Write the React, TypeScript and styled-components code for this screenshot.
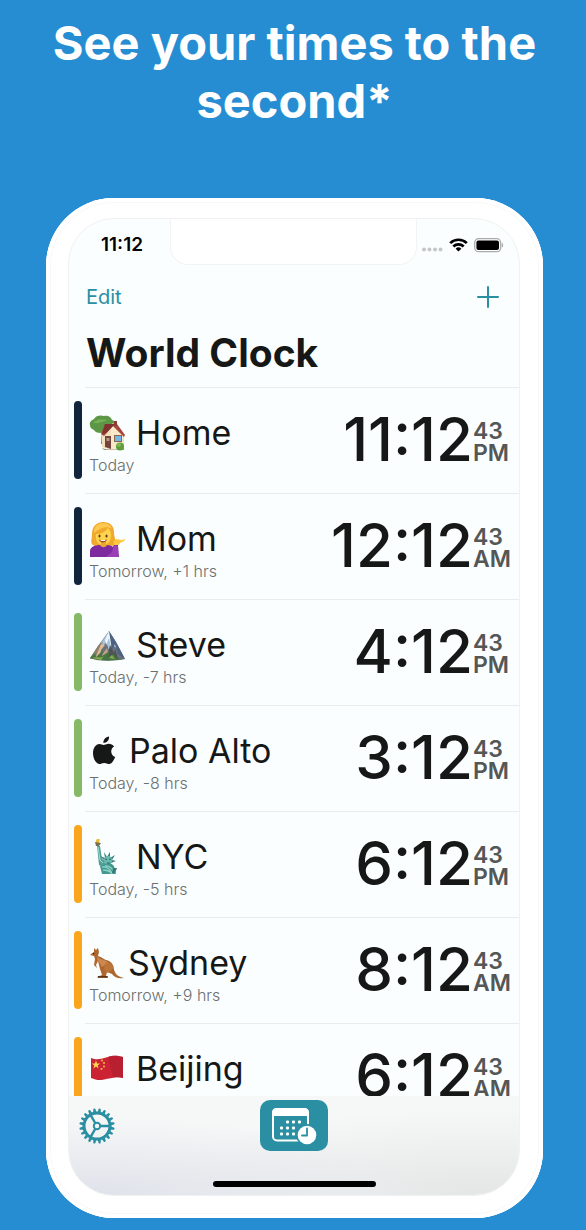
import React from "react";
import styled, { createGlobalStyle } from "styled-components";

const TEAL = "#2a8fa2";

const GlobalStyle = createGlobalStyle`
  * { box-sizing: border-box; }
  body { margin: 0; background: #278dd3; font-family: Inter, "Liberation Sans", sans-serif; }
  h1, h2, h3, p, ul { margin: 0; padding: 0; }
  button { border: 0; padding: 0; background: none; font: inherit; cursor: pointer; }
  svg { display: block; flex: none; }
`;

const Page = styled.main`
  padding: 14px 43px 12px 46px;
`;

const Headline = styled.h1`
  max-width: 500px;
  margin: 0 auto 68px;
  color: #fff;
  font-size: 47px;
  font-weight: 700;
  line-height: 58px;
  text-align: center;
`;

const Phone = styled.section`
  padding: 20px 23px 22px 22px;
  border-radius: 68px;
  background: #fff;
  box-shadow: inset 0 0 0 4px #fff, inset 0 0 0 5px #f8f8f8;
`;

const Screen = styled.div`
  overflow: hidden;
  border: 1px solid #f0f1f1;
  border-radius: 46px;
  background: #fbfefe;
`;

const StatusBar = styled.div`
  display: grid;
  grid-template-columns: 101fr 248fr 102fr;
  height: 46px;
`;

const StatusTime = styled.time`
  padding: 14px 0 0 32px;
  font-size: 19px;
  font-weight: 600;
  line-height: 24px;
`;

const Notch = styled.div`
  margin-top: -1px;
  border: 1px solid #f2f3f3;
  border-top: 0;
  border-radius: 0 0 18px 18px;
  background: #fff;
`;

const StatusIcons = styled.div`
  display: flex;
  align-items: flex-start;
  justify-content: flex-end;
  gap: 6px;
  padding: 18px 15px 0 0;
`;

const NavBar = styled.nav`
  display: flex;
  align-items: center;
  justify-content: space-between;
  height: 64px;
  padding: 0 19px 0 17px;
  color: ${TEAL};
`;

const NavButton = styled.button`
  color: inherit;
  font-size: 20px;
  font-weight: 400;
  line-height: 24px;
`;

const Title = styled.h2`
  padding: 0 17px 10px;
  color: #161817;
  font-size: 39px;
  font-weight: 700;
  line-height: 48px;
`;

const ClockList = styled.ul`
  list-style: none;
`;

const Row = styled.li`
  display: flex;
  align-items: center;
  height: 106px;
  padding-left: 5px;
`;

const Marker = styled.span<{ $color: string }>`
  flex: none;
  width: 8px;
  height: 78px;
  margin-right: 3px;
  border-radius: 4px;
  background: ${(p) => p.$color};
`;

const RowBody = styled.div`
  display: flex;
  flex: 1;
  align-items: center;
  justify-content: space-between;
  height: 100%;
  padding: 2px 9px 0 4px;
  border-top: 1px solid #e9ecec;
`;

const Info = styled.div`
  padding-top: 3px;
`;

const Place = styled.h3<{ $gap: number }>`
  display: flex;
  align-items: center;
  gap: ${(p) => p.$gap}px;
  color: #161817;
  font-size: 34px;
  font-weight: 400;
  line-height: 44px;
  white-space: nowrap;
`;

const Offset = styled.p`
  min-height: 20px;
  color: #6c6f6f;
  font-size: 16px;
  font-weight: 300;
  line-height: 20px;
`;

const Clock = styled.time`
  display: flex;
  align-items: center;
  color: #161817;
`;

const Hours = styled.span`
  padding-bottom: 6px;
  font-size: 60px;
  font-weight: 500;
  line-height: 72px;
`;

const Suffix = styled.span`
  display: flex;
  flex-direction: column;
  width: 37px;
  color: #555757;
  font-size: 23px;
  font-weight: 600;
  line-height: 22px;
`;

const TabBar = styled.footer`
  position: relative;
  display: grid;
  grid-template-columns: 1fr auto 1fr;
  justify-items: start;
  margin-top: -33px;
  padding: 4px 10px 8px;
  row-gap: 30px;
  background:
    radial-gradient(ellipse at 5% 100%, #dfe2ea 0%, rgba(230, 232, 238, 0) 55%),
    radial-gradient(ellipse at 90% 95%, #e5e7e7 0%, rgba(235, 237, 237, 0) 60%),
    #f6f7f7;
`;

const TabButton = styled.button<{ $active?: boolean }>`
  display: flex;
  align-items: center;
  justify-content: center;
  height: 51px;
  width: ${(p) => (p.$active ? "68px" : "36px")};
  border-radius: 10px;
  color: ${(p) => (p.$active ? "#fff" : TEAL)};
  background: ${(p) => (p.$active ? TEAL : "transparent")};
`;

const HomeIndicator = styled.div`
  grid-column: 1 / -1;
  justify-self: center;
  width: 163px;
  height: 6px;
  border-radius: 3px;
  background: #000;
`;

const Signal = () => (
  <svg width="22" height="16" viewBox="0 0 22 16" fill="#c6c8c8">
    {[3, 8.5, 14, 19.5].map((x) => (
      <circle key={x} cx={x} cy="12.500" r="2" />
    ))}
  </svg>
);

const Wifi = () => (
  <svg width="19" height="16" viewBox="0 0 19 16" fill="none" stroke="#000" strokeWidth="2.7">
    <path d="M1.2 6.1a12 12 0 0 1 16.6 0" />
    <path d="M4.3 9.5a7.5 7.5 0 0 1 10.4 0" />
    <path d="M9.5 14.6 6.6 11.7a4.2 4.2 0 0 1 5.8 0z" fill="#000" stroke="none" />
  </svg>
);

const Battery = () => (
  <svg width="30" height="16" viewBox="0 0 30 16">
    <rect x="0.7" y="1.7" width="26" height="13" rx="4" fill="#fff" stroke="#a9abab" strokeWidth="1.3" />
    <rect x="2.4" y="3.4" width="22.6" height="9.6" rx="2" />
    <path d="M27.8 6v4.5c1.8-.6 1.8-3.9 0-4.5z" fill="#a9abab" />
  </svg>
);

const Plus = () => (
  <svg width="24" height="24" viewBox="0 0 24 24" stroke="currentColor" strokeWidth="2" strokeLinecap="round">
    <path d="M12 2v20M2 12h20" />
  </svg>
);

const House = () => (
  <svg width="36" height="36" viewBox="0 0 36 36">
    <path d="M12 12h4v17h-4z" fill="#83533a" />
    <path d="M1 10c-1-3 2-5 4-6 2-4 7-4 10-3 4-1 7 1 8 4 4 1 4 5 3 7 0 4-4 6-7 5-3 3-6 2-7 1-4 0-6-1-7-3-3-1-4-3-4-5z" fill="#5b9744" />
    <path d="M4 8c2-3 5-2 6-4 3 2 6-1 8 2-3-1-4 2-7 1-3 3-5 0-7 1z" fill="#77b157" />
    <path d="M12 18 24 8l11 11v13l-13 3-9-3z" fill="#f2dfbd" />
    <path d="m22 10 12 10v13l-12 2z" fill="#fae9c9" />
    <path d="M12 19 16 9h12l8 11-1 2-11-11-9 10z" fill="#a8453d" />
    <path d="m16 9 10 0-9 9-4 1z" fill="#7e332f" />
    <path d="M25 6h3v5h-3z" fill="#8c3e34" />
    <path d="M16 21h6v13l-6-2z" fill="#75453b" />
    <path d="M17.500 23h3v3h-3z" fill="#b39a88" />
    <path d="M25 20h8v7h-8z" fill="#8a6850" />
    <path d="M26 21h6v5h-6z" fill="#75b6e8" />
    <path d="M13 33c6 2 15 2 22 0v2H15z" fill="#9a9883" />
    <circle cx="31" cy="31.500" r="4" fill="#5f9d3c" />
    <circle cx="30" cy="30" r="2" fill="#83b756" />
  </svg>
);

const Woman = () => (
  <svg width="36" height="36" viewBox="0 0 36 36">
    <path d="M4 24C1 22 3 18 3 13 3 5 8 1 14 1c7 0 11 4 11 10 0 6 3 10 1 13-3 2-19 3-22 0z" fill="#f0a92e" />
    <path d="M5 12C5 5 9 2 14 2c5 0 8 3 9 6-4-3-11-2-18 4z" fill="#ffc94f" />
    <path d="M7 13c5 0 9-2 12-6 2 2 3 4 3 7 0 6-3 10-8 10S6 20 7 13z" fill="#ffd34b" />
    <path d="M12 21h5v6h-5z" fill="#e9ab2e" />
    <path d="M1 36v-6c0-4 5-6 10-6 2 3 5 3 7 0 3 0 5 1 6 2l1-2h4l1 12z" fill="#7f2ba0" />
    <path d="m23 31 2-7 4 1v11H17z" fill="#9a3fb6" />
    <path d="M25 24c-1-3 0-5 2-6 3 0 5 2 9 0 0 3-4 3-5 4 0 1-1 2-2 2z" fill="#ffc640" />
    <ellipse cx="10.500" cy="15" rx="1" ry="1.500" fill="#523121" />
    <ellipse cx="17.500" cy="15" rx="1" ry="1.500" fill="#523121" />
    <path d="M10 18.500c3 1 5 1 8 0-1 4-7 4-8 0z" fill="#a44b2c" />
    <path d="M11.500 19h5l-.5 1h-4z" fill="#fff" />
  </svg>
);

const Mountain = () => (
  <svg width="36" height="36" viewBox="0 0 36 36">
    <path d="M1 31 9 19l3-4 8-11 7 11 9 17c-9 2-26 3-35-1z" fill="#68717c" />
    <path d="m12 16 8-12 7 11 2 7-6-4-3 5-3-8-5 7z" fill="#a8c4df" />
    <path d="m20 4-4 9 1 5 3-7 2 9 1-10z" fill="#edf5fa" />
    <path d="m20 4 7 11 9 17-7-5-3-10-3 6z" fill="#4c6280" />
    <path d="m9 19 5-4-3 7-3 10H1z" fill="#8f8068" />
    <path d="m12 17 4 1-4 5-1 8-5 1z" fill="#ddb998" />
    <path d="m18 21 1 4-6 7h-3z" fill="#c1a184" />
    <path d="m21 18 4 8 1-4 3 10H18z" fill="#4d5354" />
    <path d="m1 31 5-5 1 4 7-7-1 6 8-5-2 6 6-3 2 4 8 1C25 34 9 34 1 31z" fill="#477442" />
    <path d="M3 31c6-2 8 1 12-2l-3 4zM20 31l3-3 3 4z" fill="#82ad4b" />
  </svg>
);

const Apple = () => (
  <svg width="29" height="36" viewBox="0 0 29 36" fill="#161817">
    <path d="M20 3.500c.5 3.800-2.300 6.400-5.600 6.400 0-3.600 2.300-5.900 5.600-6.400z" />
    <path d="M14.500 12c1.400 0 2.800-1.300 5.400-1.300 1.800 0 3.900.9 5.200 2.700-4.300 2.600-3.600 8.700 1.100 10.600-1.700 4.200-3.700 7-6 7-1.800 0-2.700-1.100-5-1.100S12.300 31 10.500 31C7.300 31 4 26 4 20.300c0-5.900 3.200-9.300 6.500-9.300 1.800 0 2.900 1 4 1z" />
  </svg>
);

const Liberty = () => (
  <svg width="36" height="36" viewBox="0 0 36 36">
    <path d="M7 1c2-2 3 0 4-1l-1 4H7z" fill="#edbd38" />
    <path d="m6 3 6 1-2 3H7z" fill="#74724e" />
    <path d="M8 7h3l2 13 6 2 1 5-5 2-5-3z" fill="#579e99" />
    <path d="m14 20-3-3 5 2-1-6 3 5 3-5v6l5-3-3 5 4 1-5 2z" fill="#397e7c" />
    <ellipse cx="19" cy="21.500" rx="4" ry="4.800" fill="#69b8ae" />
    <path d="M14 26c5-3 9-2 11 1l2 8H13l-2-8z" fill="#449891" />
    <path d="M13 28c5-1 8 1 10 7-2-3-5-4-9-4M16 27c4-1 7 2 10 7" stroke="#8bd4c6" fill="none" strokeWidth="1.300" />
    <path d="m16 20 2 .5m2 0 2-.5m-4 4h3" stroke="#2d6e6c" />
    <path d="M24 29h4l-2 5h-3z" fill="#347a78" />
    <path d="m9 8 2 13 3 3" stroke="#9be0d5" fill="none" />
  </svg>
);

const Kangaroo = () => (
  <svg width="36" height="36" viewBox="0 0 36 36">
    <path d="m1 10 4-3 0-4 2 2 2-2 1 4-1 4c4 1 5 3 8 4 6 1 8 6 8 10l2 4c3 3 5 3 8 4-6 1-10-1-12-4l-5-2-1 4h2v2H9l-1-1 5-2-2-6-2-8-2 4 1 3-3-3 1-6-1-3z" fill="#ae672e" />
    <path d="m8 11 3 3c4 1 6 1 8 4l-6 4-3-5-1 1z" fill="#cc8850" />
    <path d="M16 19c4-3 8 0 8 5l-6 4-3-4z" fill="#bc7539" />
    <path d="M9 31h9v1.500H9z" fill="#563820" />
    <circle cx="4.500" cy="8.500" r=".8" fill="#2a1a12" />
  </svg>
);

const ChinaFlag = () => (
  <svg width="36" height="36" viewBox="0 0 36 36">
    <path d="M2 7c7 3 11 0 17-1 6-2 10-1 15 0v21c-7-2-10 0-17 1-6 2-10 1-15-1z" fill="#cb2333" />
    <path d="M19 6c6-2 10-1 15 0v21c-3-1-7-1-10-.5z" fill="#a91e30" opacity=".55" />
    <path d="m7 9.500 1.100 3h3l-2.400 1.900.9 3L7 15.600l-2.600 1.800.9-3-2.400-1.900h3z" fill="#f9d64b" />
    <g fill="#eec23e">
      <circle cx="13" cy="9.500" r="1" />
      <circle cx="15" cy="12" r="1" />
      <circle cx="15" cy="15.500" r="1" />
      <circle cx="12.500" cy="18" r="1" />
    </g>
  </svg>
);

const TEETH = Array.from({ length: 20 }, (_, i) => i * 18 + 9);

const Gear = () => (
  <svg width="36" height="36" viewBox="0 0 36 36" fill="none" stroke="currentColor">
    {TEETH.map((angle) => (
      <path key={angle} d="m16.400 4 .6-3.400q1-.8 2 0l.6 3.400z" fill="currentColor" stroke="none" transform={`rotate(${angle} 18 18)`} />
    ))}
    <circle cx="18" cy="18" r="13" strokeWidth="3" />
    <circle cx="18" cy="18" r="3.200" strokeWidth="2" />
    <path d="M21.500 18H31M16.200 15 11.500 6.800M16.200 21 11.500 29.200" strokeWidth="2.400" />
  </svg>
);

const DOTS = [
  [17, 15], [23, 15], [29, 15],
  [11, 21], [17, 21], [23, 21],
  [11, 27], [17, 27], [23, 27],
];

const CalendarClock = () => (
  <svg width="46" height="38" viewBox="0 0 46 38">
    <rect x="2" y="2" width="35" height="31.500" rx="4" fill="none" stroke="#fff" strokeWidth="2" />
    <path d="M1 10V6q0-5 5-5h27q5 0 5 5v4q0-1-2-1H4q-3 0-3 1z" fill="#fff" />
    {DOTS.map(([x, y]) => (
      <rect key={`${x}-${y}`} x={x - 2} y={y - 1.500} width="3" height="3" rx="1" fill="#fff" />
    ))}
    <circle cx="36" cy="28" r="11" fill={TEAL} />
    <circle cx="36" cy="28" r="9.300" fill="#fff" />
    <path d="M36 21.500V28.500H31" fill="none" stroke={TEAL} strokeWidth="1.800" strokeLinecap="round" strokeLinejoin="round" />
  </svg>
);

type City = {
  name: string;
  icon: React.ReactNode;
  gap: number;
  offset?: string;
  time: string;
  period: string;
  color: string;
};

const NAVY = "#10243b";
const GREEN = "#86b965";
const ORANGE = "#f9a61c";

const CITIES: City[] = [
  { name: "Home", icon: <House />, gap: 11, offset: "Today", time: "11:12", period: "PM", color: NAVY },
  { name: "Mom", icon: <Woman />, gap: 11, offset: "Tomorrow, +1 hrs", time: "12:12", period: "AM", color: NAVY },
  { name: "Steve", icon: <Mountain />, gap: 11, offset: "Today, -7 hrs", time: "4:12", period: "PM", color: GREEN },
  { name: "Palo Alto", icon: <Apple />, gap: 11, offset: "Today, -8 hrs", time: "3:12", period: "PM", color: GREEN },
  { name: "NYC", icon: <Liberty />, gap: 11, offset: "Today, -5 hrs", time: "6:12", period: "PM", color: ORANGE },
  { name: "Sydney", icon: <Kangaroo />, gap: 3, offset: "Tomorrow, +9 hrs", time: "8:12", period: "AM", color: ORANGE },
  { name: "Beijing", icon: <ChinaFlag />, gap: 11, time: "6:12", period: "AM", color: ORANGE },
];

export default function App() {
  return (
    <Page>
      <GlobalStyle />
      <Headline>See your times to the second*</Headline>
      <Phone>
        <Screen>
          <StatusBar>
            <StatusTime>11:12</StatusTime>
            <Notch />
            <StatusIcons>
              <Signal />
              <Wifi />
              <Battery />
            </StatusIcons>
          </StatusBar>
          <NavBar>
            <NavButton>Edit</NavButton>
            <NavButton aria-label="Add city">
              <Plus />
            </NavButton>
          </NavBar>
          <Title>World Clock</Title>
          <ClockList>
            {CITIES.map((city) => (
              <Row key={city.name}>
                <Marker $color={city.color} />
                <RowBody>
                  <Info>
                    <Place $gap={city.gap}>
                      {city.icon}
                      {city.name}
                    </Place>
                    <Offset>{city.offset}</Offset>
                  </Info>
                  <Clock>
                    <Hours>{city.time}</Hours>
                    <Suffix>
                      <span>43</span>
                      <span>{city.period}</span>
                    </Suffix>
                  </Clock>
                </RowBody>
              </Row>
            ))}
          </ClockList>
          <TabBar>
            <TabButton aria-label="Settings">
              <Gear />
            </TabButton>
            <TabButton $active aria-label="World clock">
              <CalendarClock />
            </TabButton>
            <HomeIndicator />
          </TabBar>
        </Screen>
      </Phone>
    </Page>
  );
}
